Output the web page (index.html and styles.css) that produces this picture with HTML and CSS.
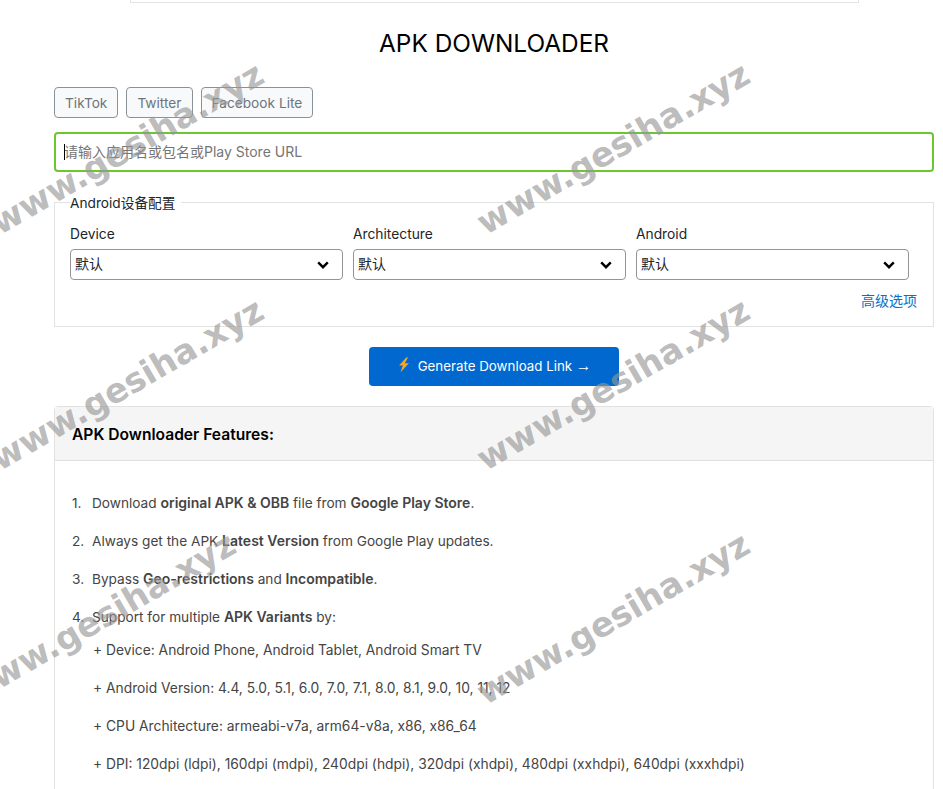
FILE: index.html
```html
<!DOCTYPE html>
<html lang="zh">
<head>
<meta charset="utf-8">
<title>APK Downloader</title>
<link rel="stylesheet" href="styles.css">
</head>
<body>
<div class="ad-box"></div>
<main class="page">
  <h1 class="title">APK DOWNLOADER</h1>
  <div class="quick">
    <button class="chip">TikTok</button>
    <button class="chip">Twitter</button>
    <button class="chip">Facebook Lite</button>
  </div>
  <div class="search">
    <input class="search-input" type="text" placeholder="请输入应用名或包名或Play Store URL">
    <span class="caret"></span>
  </div>
  <fieldset class="config">
    <legend>Android设备配置</legend>
    <div class="config-row">
      <div class="field">
        <label>Device</label>
        <div class="select-wrap">
          <select><option>默认</option></select>
          <svg class="chev" viewBox="0 0 12 8"><path d="M1.2 1.4 6 6.2l4.8-4.8" fill="none" stroke="#000" stroke-width="2.4"/></svg>
        </div>
      </div>
      <div class="field">
        <label>Architecture</label>
        <div class="select-wrap">
          <select><option>默认</option></select>
          <svg class="chev" viewBox="0 0 12 8"><path d="M1.2 1.4 6 6.2l4.8-4.8" fill="none" stroke="#000" stroke-width="2.4"/></svg>
        </div>
      </div>
      <div class="field">
        <label>Android</label>
        <div class="select-wrap">
          <select><option>默认</option></select>
          <svg class="chev" viewBox="0 0 12 8"><path d="M1.2 1.4 6 6.2l4.8-4.8" fill="none" stroke="#000" stroke-width="2.4"/></svg>
        </div>
      </div>
    </div>
    <div class="advanced"><a href="#">高级选项</a></div>
  </fieldset>
  <div class="cta">
    <button class="generate">
      <svg class="bolt" viewBox="0 0 14 18"><path d="M9.5.5 1.5 9.5h4.2L3 17.5l9.5-10.5H8L11.5.5z" fill="#f5a623"/></svg>
      <span>Generate Download Link <span class="arrow">→</span></span>
    </button>
  </div>
  <section class="card">
    <header class="card-head"><h2>APK Downloader Features:</h2></header>
    <div class="card-body">
      <ol class="features">
        <li>Download <b>original APK &amp; OBB</b> file from <b>Google Play Store</b>.</li>
        <li>Always get the APK <b>Latest Version</b> from Google Play updates.</li>
        <li>Bypass <b>Geo-restrictions</b> and <b>Incompatible</b>.</li>
        <li>Support for multiple <b>APK Variants</b> by:
          <ul class="variants">
            <li>+ Device: Android Phone, Android Tablet, Android Smart TV</li>
            <li>+ Android Version: 4.4, 5.0, 5.1, 6.0, 7.0, 7.1, 8.0, 8.1, 9.0, 10, 11, 12</li>
            <li>+ CPU Architecture: armeabi-v7a, arm64-v8a, x86, x86_64</li>
            <li>+ DPI: 120dpi (ldpi), 160dpi (mdpi), 240dpi (hdpi), 320dpi (xhdpi), 480dpi (xxhdpi), 640dpi (xxxhdpi)</li>
          </ul>
        </li>
      </ol>
    </div>
  </section>
</main>
<div class="marks" aria-hidden="true">
  <span class="wm wm1">www.gesiha.xyz</span>
  <span class="wm wm2">www.gesiha.xyz</span>
  <span class="wm wm3">www.gesiha.xyz</span>
  <span class="wm wm4">www.gesiha.xyz</span>
  <span class="wm wm5">www.gesiha.xyz</span>
  <span class="wm wm6">www.gesiha.xyz</span>
</div>
</body>
</html>
```
FILE: styles.css
```css
* { box-sizing: border-box; }
html, body { margin: 0; height: 789px; overflow: hidden; background: #fff; }
body {
  font-family: Inter, "Noto Sans CJK SC", sans-serif;
  font-size: 13.8px;
  color: #212529;
  position: relative;
}
.ad-box {
  width: 729px;
  height: 3px;
  margin-left: 130px;
  border: 1px solid #e3e3e3;
  border-top: 0;
}
.page { padding: 0 9px 0 54px; }
.title {
  margin: 24px 0 0;
  height: 32px;
  font-size: 24.4px;
  line-height: 32px;
  font-weight: 400;
  color: #000;
  text-align: center;
}
.quick { display: flex; gap: 8px; margin-top: 28px; }
.chip {
  height: 31px;
  padding: 0 10px;
  font: 13.7px Inter, sans-serif;
  color: #6c757d;
  background: #f8f9fa;
  border: 1px solid #8a9299;
  border-radius: 4px;
}
.search { position: relative; margin-top: 14px; }
.search-input {
  display: block;
  width: 100%;
  height: 40px;
  padding: 0 8px 2px;
  font: 14px Inter, "Noto Sans CJK SC", sans-serif;
  border: 2px solid #6cc72f;
  border-radius: 4px;
  outline: 0;
}
.search-input::placeholder { color: #757575; opacity: 1; }
.caret {
  position: absolute;
  left: 10px;
  top: 12px;
  width: 1px;
  height: 16px;
  background: #000;
}
.config {
  margin: 19px 0 0;
  padding: 13px 15px 0;
  height: 136px;
  border: 1px solid #e2e2e2;
  min-width: 0;
}
.config legend {
  padding: 2px 5px 0 0;
  margin-left: 0;
  font-size: 13.7px;
  line-height: 20px;
  color: #212529;
}
.config-row { display: flex; gap: 10px; padding-right: 9px; }
.field { flex: 1 1 0; min-width: 0; }
.field label {
  display: block;
  height: 17px;
  line-height: 17px;
  margin-bottom: 6px;
  color: #212529;
}
.select-wrap { position: relative; }
.select-wrap select {
  display: block;
  width: 100%;
  height: 31px;
  padding: 0 4px 4px;
  appearance: none;
  background: #fff;
  font: 14px "Noto Sans CJK SC", sans-serif;
  color: #212529;
  border: 1px solid #949494;
  border-radius: 4px;
}
.chev {
  position: absolute;
  right: 14px;
  top: 12px;
  width: 12px;
  height: 8px;
}
.advanced { margin-top: 12px; text-align: right; line-height: 17px; padding-right: 1px; }
.advanced a { color: #0a6fc9; text-decoration: none; font-size: 14px; }
.cta { display: flex; justify-content: center; margin-top: 20px; }
.generate {
  display: flex;
  align-items: center;
  justify-content: center;
  gap: 7px;
  width: 250px;
  height: 39px;
  padding: 0 0 2px;
  font: 13.33px Inter, sans-serif;
  color: #fff;
  background: #0068cf;
  border: 0;
  border-radius: 4px;
}
.arrow { font-family: "Liberation Sans", sans-serif; font-size: 15.5px; line-height: 1; }
.bolt { width: 14px; height: 16px; margin-top: -1px; }
.card {
  margin-top: 20px;
  height: 500px;
  border: 1px solid #e2e2e2;
  border-radius: 4px;
}
.card-head {
  height: 54px;
  padding: 2px 17px 0;
  display: flex;
  align-items: center;
  background: #f5f5f5;
  border-bottom: 1px solid #dfdfdf;
}
.card-head h2 { margin: 0; font-size: 15.6px; font-weight: 600; color: #000; }
.card-body { padding: 34px 17px 0; }
.features {
  margin: 0;
  padding: 0 0 0 20px;
  list-style: none;
  counter-reset: item;
  color: #444;
  font-size: 13.65px;
  line-height: 17px;
}
.features > li { margin-bottom: 21px; counter-increment: item; }
.features > li::before {
  content: counter(item) ".";
  display: inline-block;
  width: 20px;
  margin-left: -20px;
}
.features b { font-size: 14px; font-weight: 600; line-height: 1; }
.variants { list-style: none; margin: 16px 0 0; padding: 0 0 0 1px; font-size: 13.8px; }
.variants li { margin-bottom: 21px; }
.marks { position: absolute; inset: 0; pointer-events: none; overflow: hidden; }
.wm {
  position: absolute;
  font: 700 34px "DejaVu Sans", sans-serif;
  line-height: 40px;
  color: rgba(150, 150, 150, 0.65);
  white-space: nowrap;
  transform: rotate(-30deg);
  transform-origin: center;
  width: 320px;
  text-align: center;
}
.wm1 { left: -33px; top: 128px; }
.wm2 { left: 453px; top: 128px; }
.wm3 { left: -33px; top: 364px; }
.wm4 { left: 453px; top: 364px; }
.wm5 { left: -61px; top: 598px; }
.wm6 { left: 453px; top: 598px; }
```
